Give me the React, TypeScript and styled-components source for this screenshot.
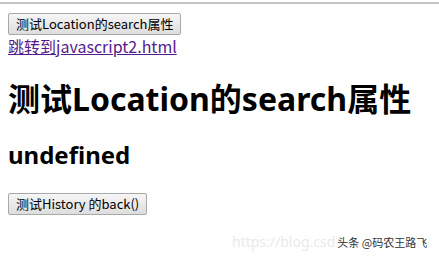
import React from "react";
import styled, { createGlobalStyle } from "styled-components";

const Global = createGlobalStyle`
  html, body { margin: 0; padding: 0; background: #fff; }
  body { font-family: "Noto Sans", "Noto Sans CJK SC", sans-serif; color: #000; }
`;

const Page = styled.div`
  width: 439px;
  height: 256px;
  position: relative;
  overflow: hidden;
`;

const TopRule = styled.div`
  height: 2px;
  background: #c4c4c4;
  margin-top: 2px;
`;

const Content = styled.div`
  padding: 9px 8px 0 8px;
  display: flex;
  flex-direction: column;
  align-items: flex-start;
`;

const Button = styled.button`
  font-family: "Noto Sans CJK SC", "Noto Sans", sans-serif;
  font-size: 13px;
  line-height: 16px;
  height: 22px;
  padding: 0 7px;
  color: #000;
  background: linear-gradient(#f6f6f6, #dddddd);
  border: 1px solid #a8a8a8;
  border-radius: 2px;
  margin: ${(p: { $mt?: number }) => p.$mt ?? 0}px 0 0 0;
`;

const Link = styled.a`
  font-family: "Noto Sans CJK SC", "Noto Sans", sans-serif;
  font-size: 16px;
  line-height: 20px;
  color: #551a8b;
  text-decoration: underline;
  margin-top: 1px;
`;

const H1 = styled.h1`
  font-family: "Noto Sans", "Noto Sans CJK SC", sans-serif;
  font-size: 32px;
  font-weight: 700;
  line-height: 38px;
  margin: 24px 0 0 0;
`;

const H2 = styled.h2`
  font-family: "Noto Sans", "Noto Sans CJK SC", sans-serif;
  font-size: 24px;
  font-weight: 700;
  line-height: 30px;
  margin: 22px 0 0 0;
`;

const Watermark = styled.div`
  position: absolute;
  left: 232px;
  top: 232px;
  display: flex;
  align-items: center;
  gap: 0;
  font-family: "Noto Sans CJK SC", sans-serif;
  font-size: 12px;
`;

const Faint = styled.span`
  color: #eaeaea;
  font-family: "Noto Sans", sans-serif;
  font-size: 14px;
`;

const Credit = styled.span`
  color: #333;
  font-size: 11px;
  margin-left: 2px;
`;

export default function App() {
  return (
    <Page>
      <Global />
      <TopRule />
      <Content>
        <Button>测试Location的search属性</Button>
        <Link href="#">跳转到javascript2.html</Link>
        <H1>测试Location的search属性</H1>
        <H2>undefined</H2>
        <Button $mt={23}>测试History 的back()</Button>
      </Content>
      <Watermark>
        <Faint>https://blog.csd</Faint>
        <Credit>头条 @码农王路飞</Credit>
      </Watermark>
    </Page>
  );
}
